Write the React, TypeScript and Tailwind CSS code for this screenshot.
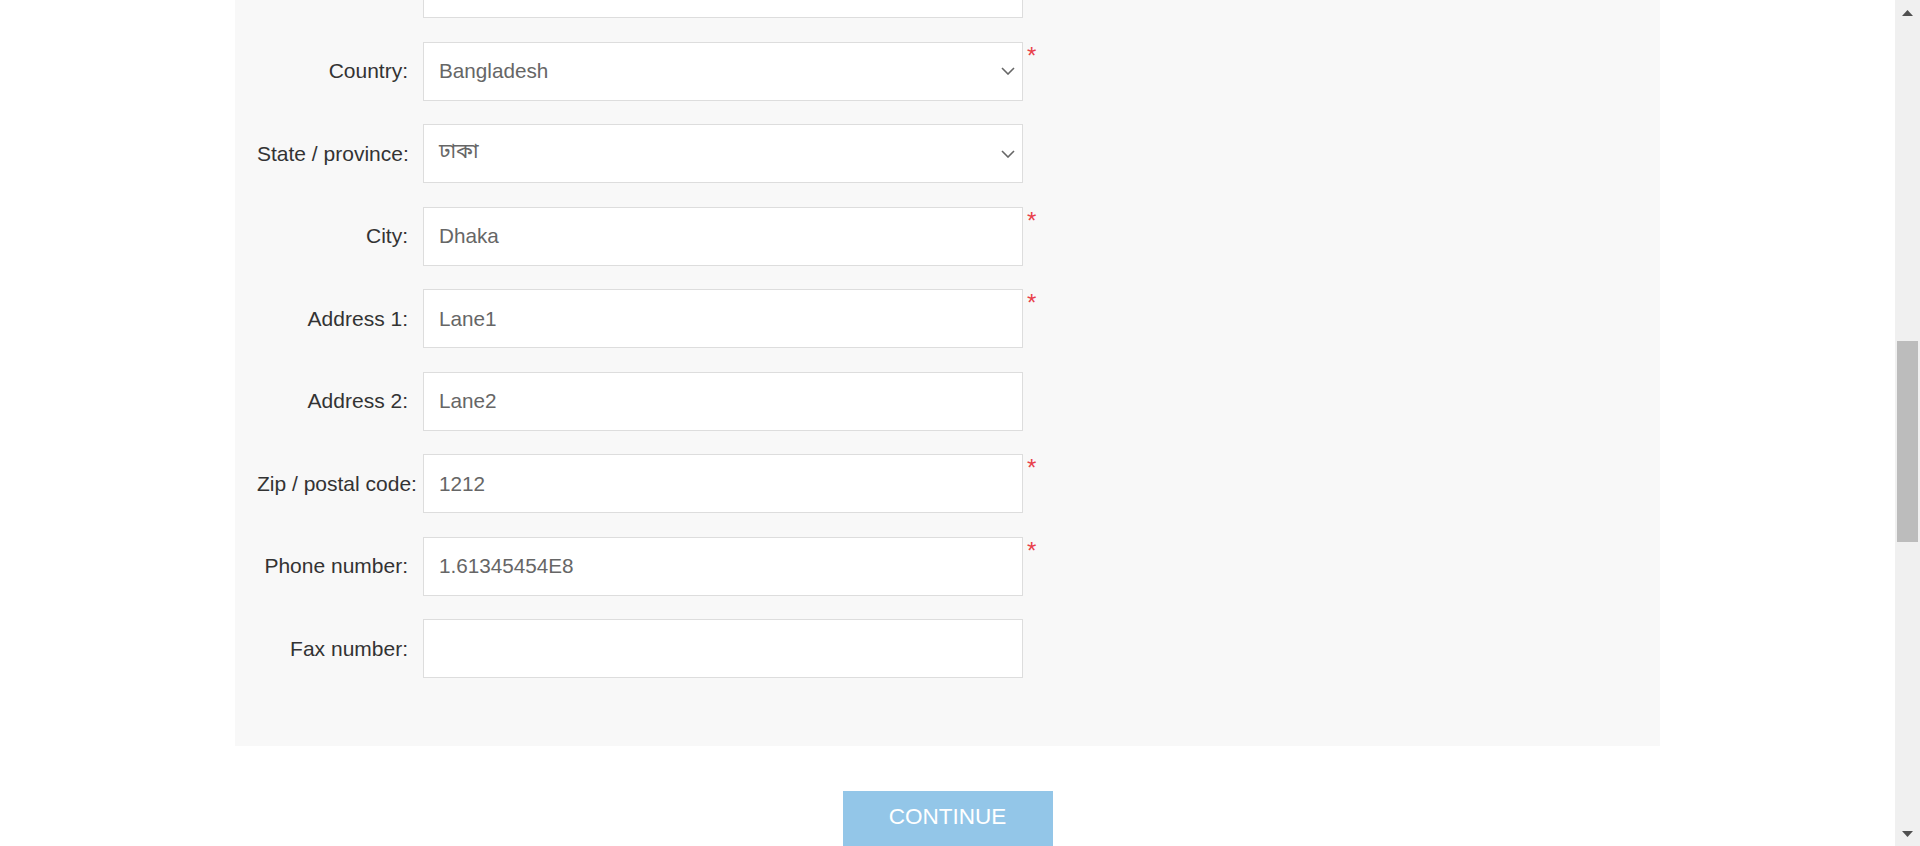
import React from "react";

type Row = {
  label: string;
  value: string;
  select?: boolean;
  required?: boolean;
  bengali?: boolean;
};

const rows: Row[] = [
  { label: "", value: "" },
  { label: "Country:", value: "Bangladesh", select: true, required: true },
  { label: "State / province:", value: "ঢাকা", select: true, bengali: true },
  { label: "City:", value: "Dhaka", required: true },
  { label: "Address 1:", value: "Lane1", required: true },
  { label: "Address 2:", value: "Lane2" },
  { label: "Zip / postal code:", value: "1212", required: true },
  { label: "Phone number:", value: "1.61345454E8", required: true },
  { label: "Fax number:", value: "" },
];

function Chevron() {
  return (
    <svg width="14" height="8" viewBox="0 0 14 8" className="shrink-0">
      <polyline
        points="1,1 7,7 13,1"
        fill="none"
        stroke="#666666"
        strokeWidth="1.6"
      />
    </svg>
  );
}

function FormRow({ row }: { row: Row }) {
  return (
    <div className="flex items-start">
      <div className="ml-[22px] flex h-[59px] w-[151px] shrink-0 items-center">
        <div className="w-full whitespace-nowrap text-right text-[21px] text-[#333333]">
          {row.label}
        </div>
      </div>
      <div className="ml-[15px] flex h-[59px] w-[600px] shrink-0 items-center justify-between border border-[#dddddd] bg-white pl-[15px] pr-[7px]">
        <span
          className={
            row.bengali
              ? "text-[21px] text-[#666666] [font-family:'Noto_Sans_Bengali','Lohit_Bengali','FreeSans','Noto_Sans',sans-serif]"
              : "text-[20.7px] text-[#666666]"
          }
        >
          {row.value}
        </span>
        {row.select && <Chevron />}
      </div>
      {row.required && (
        <span className="ml-[4px] mt-[2px] text-[24px] leading-none text-[#e8404a]">
          *
        </span>
      )}
    </div>
  );
}

export default function App() {
  return (
    <div className="flex h-[846px] w-[1920px] overflow-hidden bg-white [font-family:'Liberation_Sans',Arial,sans-serif]">
      <div className="flex w-[1895px] shrink-0 flex-col">
        <div className="mx-auto mt-[-41px] w-[1425px] bg-[#f8f8f8] pb-[68px]">
          <div className="flex flex-col gap-[23.5px]">
            {rows.map((r, i) => (
              <FormRow key={i} row={r} />
            ))}
          </div>
        </div>
        <div className="mx-auto mt-[45px] flex h-[60px] w-[210px] shrink-0 justify-center bg-[#93c6e8] pt-[12px] text-[22.5px] leading-[28px] text-white">
          CONTINUE
        </div>
      </div>
      <div className="flex w-[25px] shrink-0 flex-col bg-[#f0f0f0]">
        <div className="flex h-[25px] items-center justify-center">
          <svg width="11" height="6" viewBox="0 0 11 6">
            <polygon points="0,6 5.5,0 11,6" fill="#505050" />
          </svg>
        </div>
        <div className="flex-1 pl-[2px] pt-[316px]">
          <div className="h-[201px] w-[21px] bg-[#bcbcbc]" />
        </div>
        <div className="flex h-[25px] items-center justify-center">
          <svg width="11" height="6" viewBox="0 0 11 6">
            <polygon points="0,0 5.5,6 11,0" fill="#505050" />
          </svg>
        </div>
      </div>
    </div>
  );
}
